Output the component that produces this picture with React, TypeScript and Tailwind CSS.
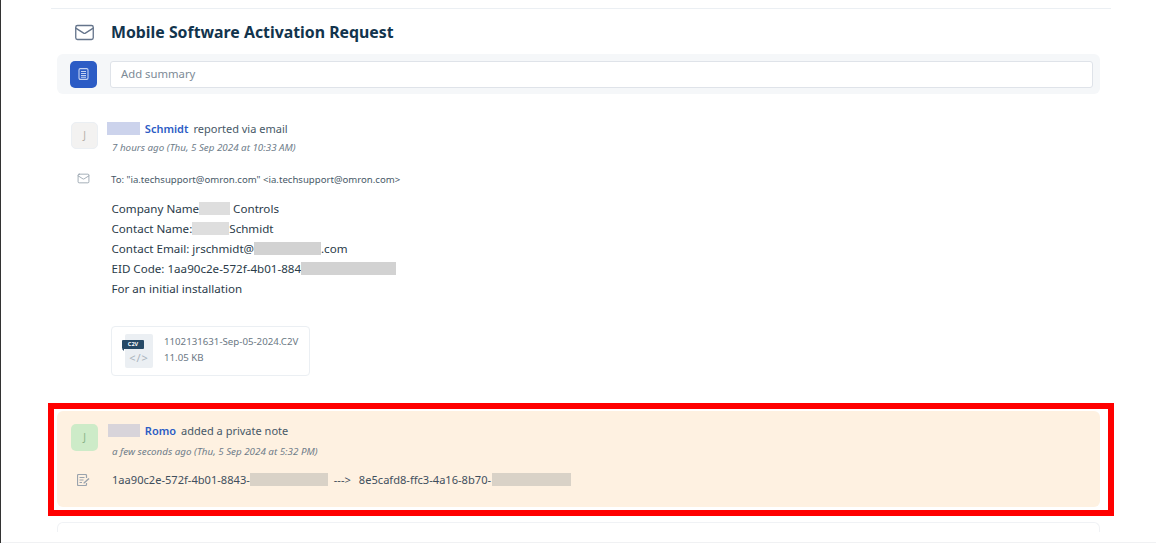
import { Mail } from "lucide-react";
import type { ReactNode } from "react";

const font = "font-['Noto_Sans','Open_Sans',sans-serif]";

function Blur({ w, className = "bg-[#d2d2d2]" }: { w: number; className?: string }) {
  return <span className={`inline-block h-[13px] align-[-2px] ${className}`} style={{ width: w }} />;
}

function Avatar({ className }: { className: string }) {
  return (
    <div className={`flex size-[27px] shrink-0 items-center justify-center rounded-[5px] text-[10px] ${className}`}>
      J
    </div>
  );
}

function Row({ left, children }: { left: ReactNode; children: ReactNode }) {
  return (
    <div className="flex">
      <div className="flex w-[55px] shrink-0 justify-center">{left}</div>
      <div className="min-w-0 flex-1">{children}</div>
    </div>
  );
}

function NoteIcon() {
  return (
    <svg width="13" height="12" viewBox="0 0 13 12" fill="none" stroke="#9aa3ad" strokeWidth="1.2">
      <path d="M9.5 4V1.5a1 1 0 0 0-1-1h-7a1 1 0 0 0-1 1v9a1 1 0 0 0 1 1h7a1 1 0 0 0 1-1V9" />
      <path d="M2.5 3.5h5M2.5 6h4M2.5 8.500h2.500" />
      <path d="M6.500 8.500l5-4.500 1 1-5 4.500h-1z" fill="#9aa3ad" stroke="none" />
    </svg>
  );
}

export default function App() {
  return (
    <div className={`relative h-[543px] w-[1156px] overflow-hidden border-l border-[#333] bg-white pt-[8px] ${font}`}>
      <div className="ml-[50px] w-[1060px] border-t border-[#ebeff3] pt-[13px]">
        <div className="flex h-[21px] items-center">
          <div className="flex w-[60px] justify-center pl-[6px]">
            <Mail className="size-[21px] text-[#64748b]" strokeWidth={1.5} />
          </div>
          <h1 className="text-[15.850px] leading-[21px] font-bold text-[#12344d]">Mobile Software Activation Request</h1>
        </div>

        <div className="mt-[11px] ml-[6px] flex h-[40px] w-[1043px] items-center rounded-[6px] bg-[#f5f7f9] pr-[7px] pl-[13px]">
          <div className="flex size-[27px] items-center justify-center rounded-[5px] bg-[#2c5cc5]">
            <svg width="11" height="12" viewBox="0 0 11 12" fill="none" stroke="#c3d2f2" strokeWidth="1.1">
              <rect x="1" y="0.600" width="9" height="10.800" rx="1.300" />
              <path d="M3 3.500h5M3 5.500h5M3 7.500h5M3 9.300h5" />
            </svg>
          </div>
          <div className="ml-[13px] flex h-[27px] flex-1 items-center rounded-[3px] border border-[#dfe3e9] bg-white pt-[1px] pl-[10px] text-[11.300px] text-[#7d8a96]">
            Add summary
          </div>
        </div>

        <div className="mt-[26px] ml-[6px] w-[1043px]">
          <Row
            left={<Avatar className="mt-[2px] border border-[#ebeff3] bg-[#f3f2f1] text-[#b7b0a8]" />}
          >
            <p className="mt-[1px] -ml-[1px] text-[11px] leading-[16px] text-[#475867]">
              <Blur w={33} className="mr-[2px] -ml-[4px] bg-[#ccd3ec]" />
              <span className="font-semibold text-[#2c5cc5]"> Schmidt</span>
              <span className="ml-[5px]">reported via email</span>
            </p>
            <p className="mt-[4px] text-[9.800px] leading-[13px] text-[#6e7c89] italic">
              7 hours ago (Thu, 5 Sep 2024 at 10:33 AM)
            </p>
          </Row>

          <div className="mt-[19px]">
            <Row
              left={<Mail className="mt-[-1px] mr-[3px] size-[13px] text-[#8a97a3]" strokeWidth={1.400} />}
            >
              <p className="-ml-[1px] text-[9.600px] leading-[13px] text-[#475867]">
                To: "ia.techsupport@omron.com" &lt;ia.techsupport@omron.com&gt;
              </p>
            </Row>
          </div>

          <div className="mt-[13px] ml-[54.500px] text-[11.600px] leading-[20px] text-[#2a3b49]">
            <p>
              Company Name
              <Blur w={31} className="bg-[#dedede]" /> Controls
            </p>
            <p>
              Contact Name:
              <Blur w={37} className="bg-[#dedede]" />
              Schmidt
            </p>
            <p>
              Contact Email: jrschmidt@
              <Blur w={67} />
              .com
            </p>
            <p>
              EID Code: 1aa90c2e-572f-4b01-884
              <Blur w={95} />
            </p>
            <p>For an initial installation</p>
          </div>

          <div className="mt-[27px] ml-[54px] flex h-[50px] w-[199px] items-center rounded-[4px] border border-[#ebeff3] bg-white">
            <div className="relative ml-[10px] h-[34px] w-[32px] shrink-0">
              <div className="absolute top-0 right-[1px] bottom-0 left-[3px] flex items-end justify-center rounded-[2px] bg-[#ebeff3] pb-[4px] text-[11px] leading-[13px] tracking-[1px] text-[#a9b4bd]">
                &lt;/&gt;
              </div>
              <div className="absolute top-[6px] left-0 flex h-[9px] w-[22px] items-center justify-center rounded-[1px] bg-[#264966] text-[5.500px] font-bold text-white">
                C2V
              </div>
              <div className="absolute top-[15px] left-0 size-0 border-t-[2px] border-l-[2px] border-t-[#264966] border-l-transparent" />
            </div>
            <div className="-mt-[3px] ml-[10px] text-[9.700px] leading-[16px] text-[#6b7884]">
              <p>1102131631-Sep-05-2024.C2V</p>
              <p>11.05 KB</p>
            </div>
          </div>
        </div>

        <div className="mt-[35px] ml-[6px] h-[96px] w-[1043px] rounded-[6px] bg-[#fef1e1] pt-[13px]">
          <Row left={<Avatar className="bg-[#cdebc8] text-[#8ab389]" />}>
            <p className="-mt-[1px] text-[11px] leading-[16px] text-[#475867]">
              <Blur w={32} className="mr-[2px] -ml-[4px] bg-[#d8d4da]" />
              <span className="font-semibold text-[#2c5cc5]"> Romo</span>
              <span className="ml-[5px]">added a private note</span>
            </p>
            <p className="mt-[6px] text-[9.800px] leading-[13px] text-[#6e7c89] italic">
              a few seconds ago (Thu, 5 Sep 2024 at 5:32 PM)
            </p>
          </Row>
          <div className="mt-[13px]">
            <Row left={<div className="mt-[3px] mr-[3px]"><NoteIcon /></div>}>
              <p className="text-[11.100px] leading-[18px] text-[#3f4f5d]">
                1aa90c2e-572f-4b01-8843-
                <Blur w={78} className="bg-[#d9d2c7]" />
                <span className="ml-[6px]">---&gt;</span>
                <span className="ml-[8px]">8e5cafd8-ffc3-4a16-8b70-</span>
                <Blur w={79} className="ml-[1px] bg-[#d9d2c7]" />
              </p>
            </Row>
          </div>
        </div>

        <div className="mt-[15px] ml-[6px] h-[10px] w-[1043px] rounded-t-[6px] border-t border-r border-l border-[#f0f2f5]" />
      </div>

      <div className="absolute bottom-0 left-0 h-[1px] w-full bg-[#f0f1f3]" />
      <div className="absolute top-[403px] left-[47px] h-[113px] w-[1066px] border-[6px] border-[#ff0000]" />
    </div>
  );
}
